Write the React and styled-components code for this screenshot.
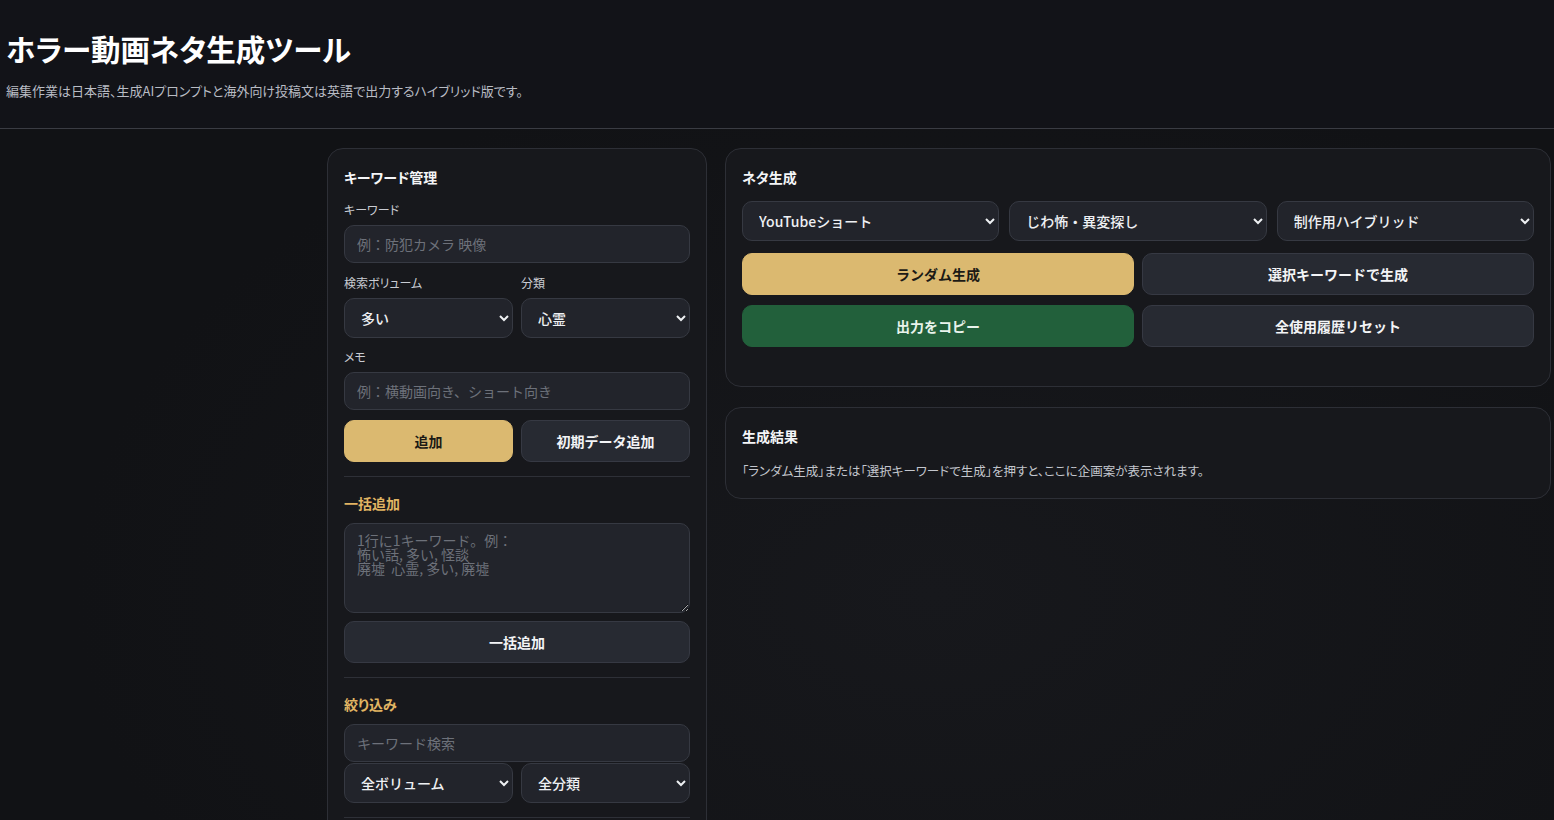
import React from "react";
import styled, { createGlobalStyle } from "styled-components";

const GlobalStyle = createGlobalStyle`
  html, body {
    margin: 0;
    padding: 0;
  }
  body {
    background: radial-gradient(ellipse at 60% 70%, #17181c 0%, #111215 65%);
    background-color: #111215;
    color: #eceef2;
    font-family: "Noto Sans CJK JP", "Noto Sans", sans-serif;
    font-feature-settings: "palt";
    min-height: 820px;
    overflow: hidden;
  }
`;

const Header = styled.header`
  background: #121318;
  border-bottom: 1px solid #3a3c43;
  padding: 27px 6px 27px;

  h1 {
    margin: 0;
    font-size: 29.5px;
    line-height: 42px;
    font-weight: 700;
    color: #ffffff;
  }

  p {
    margin: 12px 0 0;
    font-size: 13px;
    line-height: 20px;
    color: #b9bcc4;
  }
`;

const Main = styled.main`
  display: grid;
  grid-template-columns: 380px 1fr;
  gap: 18px;
  padding: 19px 3px 0 327px;
  align-items: start;
`;

const Column = styled.div`
  display: flex;
  flex-direction: column;
  gap: 20px;
`;

const Panel = styled.section`
  background: #17181c;
  border: 1px solid #2d2f36;
  border-radius: 16px;
  padding: 18px 16px ${(p) => p.$bottom || 17}px;
  display: flex;
  flex-direction: column;
`;

const PanelTitle = styled.h2`
  margin: 0 0 14px;
  font-size: 14px;
  line-height: 20px;
  font-weight: 700;
  color: #f4f5f7;
`;

const SubTitle = styled.h3`
  margin: 16px 0 10px;
  font-size: 14px;
  line-height: 20px;
  font-weight: 700;
  color: #e1b563;
`;

const Label = styled.label`
  display: block;
  font-size: 12px;
  line-height: 18px;
  color: #c9ccd3;
  margin-bottom: 6px;
`;

const Field = styled.div`
  display: flex;
  flex-direction: column;
  margin-top: ${(p) => p.$mt || 0}px;
  margin-bottom: ${(p) => p.$mb || 0}px;
`;

const Row = styled.div`
  display: grid;
  grid-template-columns: repeat(${(p) => p.$cols || 2}, 1fr);
  gap: ${(p) => p.$gap || 8}px;
  margin-top: ${(p) => p.$mt || 0}px;
  margin-bottom: ${(p) => p.$mb || 0}px;
`;

const controlBase = `
  box-sizing: border-box;
  width: 100%;
  background: #22242b;
  border: 1px solid #363942;
  color: #eef0f3;
  font-family: "Noto Sans CJK JP", "Noto Sans", sans-serif;
  font-feature-settings: normal;
  font-size: 14px;
  outline: none;
`;

const Input = styled.input`
  ${controlBase}
  height: 38px;
  border-radius: 10px;
  padding: 0 12px;

  &::placeholder {
    color: #6d717a;
  }
`;

const TextArea = styled.textarea`
  ${controlBase}
  height: 90px;
  border-radius: 10px;
  padding: 9px 12px;
  line-height: 14px;
  resize: vertical;
  display: block;

  &::placeholder {
    color: #6d717a;
  }
`;

const Select = styled.select`
  ${controlBase}
  color-scheme: dark;
  height: 40px;
  border-radius: 10px;
  padding: 0 10px 0 12px;
  font-weight: 500;
`;

const Button = styled.button`
  box-sizing: border-box;
  height: 42px;
  width: 100%;
  border-radius: 10px;
  font-family: "Noto Sans CJK JP", "Noto Sans", sans-serif;
  font-size: 14px;
  font-weight: 700;
  cursor: pointer;
  border: 1px solid
    ${(p) =>
      p.$variant === "gold" ? "#dbb970" : p.$variant === "green" ? "#22603b" : "#363943"};
  background: ${(p) =>
    p.$variant === "gold" ? "#dbb970" : p.$variant === "green" ? "#22603b" : "#272a32"};
  color: ${(p) =>
    p.$variant === "gold" ? "#1c1a15" : p.$variant === "green" ? "#e9f3ec" : "#f3f4f6"};
`;

const Divider = styled.hr`
  border: none;
  border-top: 1px solid #2e3037;
  margin: ${(p) => p.$top || 14}px 0 0;
  width: 100%;
`;

const ResultText = styled.p`
  margin: 0;
  font-size: 12.5px;
  line-height: 20px;
  color: #c3c6cd;
`;

export default function App() {
  return (
    <>
      <GlobalStyle />
      <Header>
        <h1>ホラー動画ネタ生成ツール</h1>
        <p>編集作業は日本語、生成AIプロンプトと海外向け投稿文は英語で出力するハイブリッド版です。</p>
      </Header>

      <Main>
        <Column>
          <Panel $bottom={30}>
            <PanelTitle>キーワード管理</PanelTitle>
            <Field $mb={11}>
              <Label>キーワード</Label>
              <Input placeholder="例：防犯カメラ 映像" />
            </Field>
            <Row $mb={10}>
              <Field>
                <Label>検索ボリューム</Label>
                <Select defaultValue="多い">
                  <option>多い</option>
                  <option>普通</option>
                  <option>少ない</option>
                </Select>
              </Field>
              <Field>
                <Label>分類</Label>
                <Select defaultValue="心霊">
                  <option>心霊</option>
                  <option>怪談</option>
                  <option>廃墟</option>
                </Select>
              </Field>
            </Row>
            <Field $mb={10}>
              <Label>メモ</Label>
              <Input placeholder="例：横動画向き、ショート向き" />
            </Field>
            <Row>
              <Button $variant="gold">追加</Button>
              <Button>初期データ追加</Button>
            </Row>
            <Divider />

            <SubTitle>一括追加</SubTitle>
            <TextArea
              placeholder={"1行に1キーワード。例：\n怖い話, 多い, 怪談\n廃墟  心霊, 多い, 廃墟"}
            />
            <Field $mt={8}>
              <Button>一括追加</Button>
            </Field>
            <Divider />

            <SubTitle>絞り込み</SubTitle>
            <Input placeholder="キーワード検索" />
            <Row $mt={1}>
              <Select defaultValue="全ボリューム">
                <option>全ボリューム</option>
                <option>多い</option>
              </Select>
              <Select defaultValue="全分類">
                <option>全分類</option>
                <option>心霊</option>
              </Select>
            </Row>
            <Divider />
          </Panel>
        </Column>

        <Column>
          <Panel $bottom={39}>
            <PanelTitle>ネタ生成</PanelTitle>
            <Row $cols={3} $gap={10} $mb={12}>
              <Select defaultValue="YouTubeショート">
                <option>YouTubeショート</option>
                <option>YouTube長尺</option>
              </Select>
              <Select defaultValue="じわ怖・異変探し">
                <option>じわ怖・異変探し</option>
                <option>ガチ怖</option>
              </Select>
              <Select defaultValue="制作用ハイブリッド">
                <option>制作用ハイブリッド</option>
                <option>英語のみ</option>
              </Select>
            </Row>
            <Row $mb={10}>
              <Button $variant="gold">ランダム生成</Button>
              <Button>選択キーワードで生成</Button>
            </Row>
            <Row>
              <Button $variant="green">出力をコピー</Button>
              <Button>全使用履歴リセット</Button>
            </Row>
          </Panel>

          <Panel>
            <PanelTitle style={{ marginBottom: 15 }}>生成結果</PanelTitle>
            <ResultText>
              「ランダム生成」または「選択キーワードで生成」を押すと、ここに企画案が表示されます。
            </ResultText>
          </Panel>
        </Column>
      </Main>
    </>
  );
}
